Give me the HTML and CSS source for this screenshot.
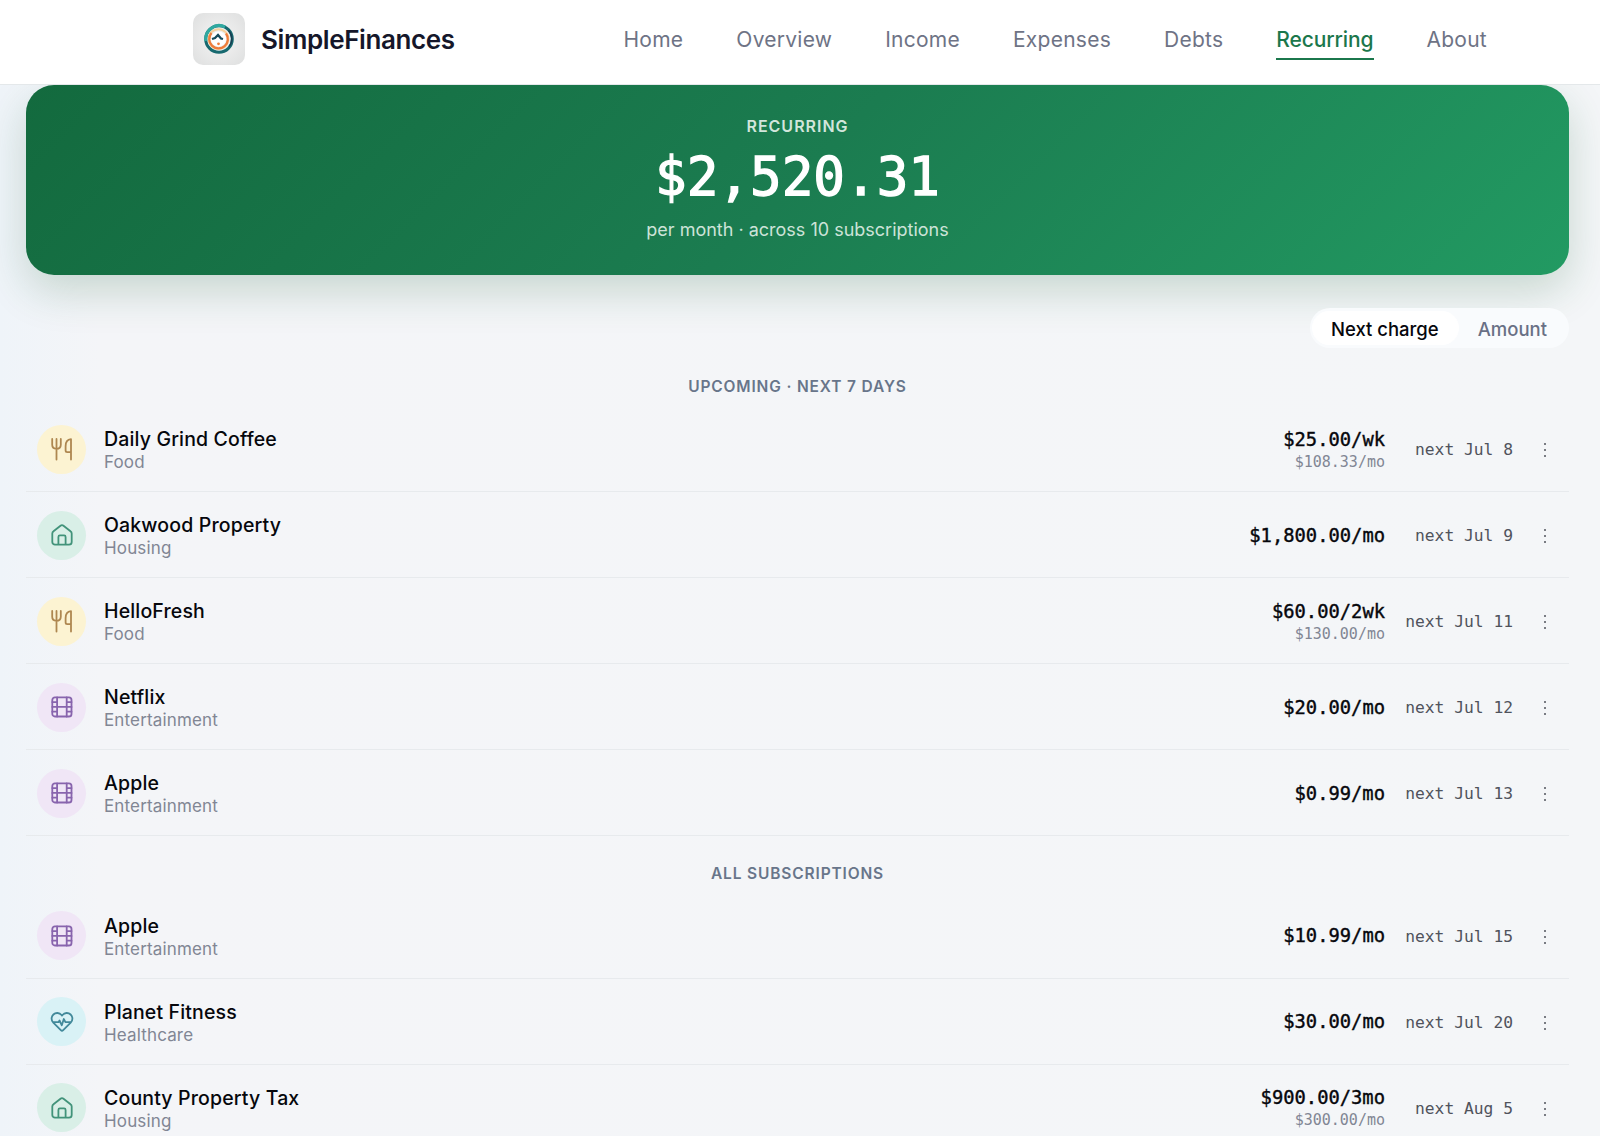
FILE: index.html
```html
<!DOCTYPE html>
<html lang="en">
<head>
    <meta charset="UTF-8">
    <meta name="viewport" content="width=device-width, initial-scale=1.0">
    <title>SimpleFinances - Recurring</title>
    <link rel="stylesheet" href="styles.css">
</head>
<body>
    <!-- Shared icons -->
    <svg class="icon-defs" width="0" height="0">
        <symbol id="icon-food" viewBox="0 0 24 24">
            <path d="M2.2 2v5.8c0 2.600 1.500 4 4.300 4s4.300-1.400 4.300-4V2M6.500 2v20.500M21 22.500V2.200c-3.400.3-5.400 3-5.400 7v4.300c0 1 .6 1.600 1.600 1.600H21"/>
        </symbol>
        <symbol id="icon-house" viewBox="0 0 24 24">
            <path d="M2.300 10.600c0-1 .4-1.800 1.200-2.400l7-5.500a2.400 2.400 0 0 1 3 0l7 5.500c.8.6 1.200 1.400 1.200 2.400v8.400a2.700 2.700 0 0 1-2.700 2.700H5a2.700 2.700 0 0 1-2.700-2.700zM8.400 21.500v-7.600c0-.9.6-1.500 1.500-1.500h4.200c.9 0 1.500.6 1.500 1.500v7.600"/>
        </symbol>
        <symbol id="icon-film" viewBox="0 0 24 24">
            <rect x="2.300" y="2.300" width="19.200" height="19.200" rx="2.600"/>
            <path d="M7.100 2.300v19.200M16.700 2.300v19.200M7.100 11.900h9.600M2.300 7.100h4.800M2.300 11.900h4.800M2.300 16.700h4.800M16.700 7.100h4.800M16.700 11.900h4.800M16.700 16.700h4.800"/>
        </symbol>
        <symbol id="icon-heart" viewBox="0 0 24 24">
            <path d="M10.800 20.200 3.300 12.700a5.700 5.700 0 0 1 .1-8.200c2.300-2.200 6-2 8.100.5l.5.6.5-.6c2.100-2.500 5.800-2.700 8.100-.5a5.700 5.700 0 0 1 .1 8.200l-7.500 7.500a1.700 1.700 0 0 1-2.400 0zM3.300 12.200h5.200l1-1.700 2.300 4.800 2-6.300 1.600 3.200h5.300"/>
        </symbol>
    </svg>

    <header class="navbar">
        <div class="navbar-inner">
            <div class="brand">
                <div class="brand-logo">
                    <svg width="32" height="32" viewBox="0 0 32 32" fill="none">
                        <circle cx="16" cy="16" r="13.300" stroke="#17696f" stroke-width="3"/>
                        <path d="M3 18A13.300 13.300 0 0 1 22 4" stroke="#2fa9a0" stroke-width="3.200"/>
                        <path d="M25.500 7.500a12 12 0 0 1 .5 16" stroke="#173f52" stroke-width="1.500"/>
                        <circle cx="15.500" cy="16" r="9.800" stroke="#f5d09c" stroke-width="2"/>
                        <path d="M8.500 10a9.300 9.300 0 1 0 14.500.5" stroke="#ef7d3c" stroke-width="2.300"/>
                        <circle cx="15.500" cy="16" r="7.600" fill="#fff"/>
                        <path d="m9 16 3-1 3-3 3 3.500 2 .5" stroke="#174b5c" stroke-width="2.300"/>
                        <circle cx="15.500" cy="20.800" r="1.400" fill="#ef7d3c"/>
                    </svg>
                </div>
                <span class="brand-name">SimpleFinances</span>
            </div>
            <nav class="nav-links">
                <a class="nav-link">Home</a>
                <a class="nav-link">Overview</a>
                <a class="nav-link">Income</a>
                <a class="nav-link">Expenses</a>
                <a class="nav-link">Debts</a>
                <a class="nav-link active">Recurring</a>
                <a class="nav-link">About</a>
            </nav>
        </div>
    </header>

    <main class="page">
        <section class="hero">
            <div class="hero-label">RECURRING</div>
            <div class="hero-amount">$2,520.31</div>
            <div class="hero-sub">per month · across 10 subscriptions</div>
        </section>

        <div class="toolbar">
            <div class="segmented">
                <button class="segment selected">Next charge</button>
                <button class="segment">Amount</button>
            </div>
        </div>

        <!-- Upcoming -->
        <h2 class="section-title">UPCOMING · NEXT 7 DAYS</h2>
        <div class="list">
            <div class="row">
                <div class="badge food"><svg class="icon"><use href="#icon-food"/></svg></div>
                <div class="info"><div class="name">Daily Grind Coffee</div><div class="category">Food</div></div>
                <div class="price"><div class="amount">$25.00/wk</div><div class="monthly">$108.33/mo</div></div>
                <div class="next">next Jul 8</div>
                <div class="more"><i></i><i></i><i></i></div>
            </div>
            <div class="row">
                <div class="badge housing"><svg class="icon"><use href="#icon-house"/></svg></div>
                <div class="info"><div class="name">Oakwood Property</div><div class="category">Housing</div></div>
                <div class="price"><div class="amount">$1,800.00/mo</div></div>
                <div class="next">next Jul 9</div>
                <div class="more"><i></i><i></i><i></i></div>
            </div>
            <div class="row">
                <div class="badge food"><svg class="icon"><use href="#icon-food"/></svg></div>
                <div class="info"><div class="name">HelloFresh</div><div class="category">Food</div></div>
                <div class="price"><div class="amount">$60.00/2wk</div><div class="monthly">$130.00/mo</div></div>
                <div class="next">next Jul 11</div>
                <div class="more"><i></i><i></i><i></i></div>
            </div>
            <div class="row">
                <div class="badge fun"><svg class="icon"><use href="#icon-film"/></svg></div>
                <div class="info"><div class="name">Netflix</div><div class="category">Entertainment</div></div>
                <div class="price"><div class="amount">$20.00/mo</div></div>
                <div class="next">next Jul 12</div>
                <div class="more"><i></i><i></i><i></i></div>
            </div>
            <div class="row">
                <div class="badge fun"><svg class="icon"><use href="#icon-film"/></svg></div>
                <div class="info"><div class="name">Apple</div><div class="category">Entertainment</div></div>
                <div class="price"><div class="amount">$0.99/mo</div></div>
                <div class="next">next Jul 13</div>
                <div class="more"><i></i><i></i><i></i></div>
            </div>
        </div>

        <!-- Everything else -->
        <h2 class="section-title all">ALL SUBSCRIPTIONS</h2>
        <div class="list">
            <div class="row">
                <div class="badge fun"><svg class="icon"><use href="#icon-film"/></svg></div>
                <div class="info"><div class="name">Apple</div><div class="category">Entertainment</div></div>
                <div class="price"><div class="amount">$10.99/mo</div></div>
                <div class="next">next Jul 15</div>
                <div class="more"><i></i><i></i><i></i></div>
            </div>
            <div class="row">
                <div class="badge health"><svg class="icon"><use href="#icon-heart"/></svg></div>
                <div class="info"><div class="name">Planet Fitness</div><div class="category">Healthcare</div></div>
                <div class="price"><div class="amount">$30.00/mo</div></div>
                <div class="next">next Jul 20</div>
                <div class="more"><i></i><i></i><i></i></div>
            </div>
            <div class="row">
                <div class="badge housing"><svg class="icon"><use href="#icon-house"/></svg></div>
                <div class="info"><div class="name">County Property Tax</div><div class="category">Housing</div></div>
                <div class="price"><div class="amount">$900.00/3mo</div><div class="monthly">$300.00/mo</div></div>
                <div class="next">next Aug 5</div>
                <div class="more"><i></i><i></i><i></i></div>
            </div>
        </div>
    </main>
</body>
</html>
```
FILE: styles.css
```css
* {
    box-sizing: border-box;
}

body {
    margin: 0;
    height: 1136px;
    overflow: hidden;
    font-family: Inter, "Liberation Sans", sans-serif;
    color: #06070c;
    background: linear-gradient(90deg, #eff4f9 0, #f4f5f8 100px, #f4f6f8 100%);
}

.icon-defs {
    position: absolute;
}

/* Navbar */
.navbar {
    position: relative;
    z-index: 1;
    height: 85px;
    background: #fff;
    border-bottom: 1px solid #e4e8ea;
}

.navbar-inner {
    display: flex;
    align-items: center;
    justify-content: space-between;
    height: 77px;
    padding: 0 113px 0 193px;
}

.brand {
    display: flex;
    align-items: center;
    gap: 16px;
}

.brand-logo {
    display: flex;
    align-items: center;
    justify-content: center;
    width: 52px;
    height: 52px;
    border-radius: 10px;
    background: radial-gradient(circle, #eee 30%, #dedfdf 100%);
}

.brand-name {
    padding-top: 1px;
    font-size: 26px;
    font-weight: 600;
    letter-spacing: -0.4px;
    color: #15172a;
}

.nav-links {
    display: flex;
    gap: 53px;
    padding-top: 3px;
}

.nav-link {
    padding: 6px 0 5px;
    border-bottom: 2px solid transparent;
    font-size: 21px;
    line-height: 27px;
    letter-spacing: 0.25px;
    color: #6e7385;
}

.nav-link.active {
    font-weight: 500;
    letter-spacing: -0.1px;
    color: #1b774c;
    border-color: #1b774c;
}

/* Hero */
.page {
    padding: 0 31px 0 26px;
}

.hero {
    height: 190px;
    padding-top: 30px;
    border-radius: 28px;
    text-align: center;
    color: #fff;
    background: linear-gradient(135deg, #136a3e 0%, #1b7c50 50%, #229a62 100%);
    box-shadow: 0 16px 44px rgba(20, 90, 45, 0.2);
}

.hero-label {
    font-size: 16px;
    font-weight: 600;
    line-height: 22px;
    letter-spacing: 1px;
    color: #d2e6dc;
}

.hero-amount {
    font-family: "DejaVu Sans Mono", monospace;
    font-size: 52.600px;
    line-height: 79px;
    -webkit-text-stroke: 1.3px #fff;
}

.hero-sub {
    font-size: 18px;
    line-height: 28px;
    color: #cde3d8;
}

/* Sort toggle */
.toolbar {
    display: flex;
    justify-content: flex-end;
    margin-top: 33px;
}

.segmented {
    display: flex;
    height: 40px;
    padding: 3px 2px;
    border-radius: 20px;
    background: #f9fbfd;
}

.segment {
    padding: 2px 20px 0 19px;
    border: 0;
    border-radius: 17px;
    background: none;
    font-family: inherit;
    font-size: 18.500px;
    font-weight: 500;
    color: #697085;
}

.segment.selected {
    background: #fff;
    color: #06070c;
}

/* Lists */
.section-title {
    margin: 29px 0 9px;
    font-size: 15.500px;
    font-weight: 600;
    line-height: 20px;
    letter-spacing: 0.85px;
    text-align: center;
    color: #68758a;
}

.section-title.all {
    margin: 28px 0 8px;
}

.row {
    display: flex;
    align-items: center;
    height: 86.100px;
    padding: 1px 12px 0 11px;
    border-bottom: 1px solid #e7eaed;
}

.badge {
    display: flex;
    align-items: center;
    justify-content: center;
    width: 49px;
    height: 49px;
    margin-right: 18px;
    border-radius: 50%;
}

.icon {
    width: 24px;
    height: 24px;
    fill: none;
    stroke: currentColor;
    stroke-width: 1.800;
    stroke-linecap: round;
    stroke-linejoin: round;
}

.food {
    color: #ae8750;
    background: #fcf3d2;
}

.housing {
    color: #42937a;
    background: #d9efe7;
}

.fun {
    color: #8864ad;
    background: #f0e6f6;
}

.health {
    color: #42899a;
    background: #d9f2f6;
}

.info {
    flex: 1;
    padding-top: 2px;
}

.name {
    font-size: 19.500px;
    font-weight: 500;
    line-height: 25px;
    letter-spacing: 0.15px;
}

.category {
    font-size: 17px;
    line-height: 21px;
    letter-spacing: 0.15px;
    color: #818694;
}

.price,
.next {
    padding-top: 1px;
    font-family: "DejaVu Sans Mono", monospace;
    text-align: right;
}

.amount {
    font-size: 18.800px;
    line-height: 24px;
    -webkit-text-stroke: 0.4px #06070c;
}

.monthly {
    font-size: 15px;
    line-height: 20px;
    color: #818694;
}

.next {
    width: 128px;
    font-size: 16.300px;
    color: #50535c;
}

.more {
    display: flex;
    flex-direction: column;
    align-items: center;
    gap: 4px;
    width: 24px;
    margin: 2px 0 0 20px;
}

.more i {
    width: 2px;
    height: 2px;
    border-radius: 1px;
    background: #50535c;
}
```
